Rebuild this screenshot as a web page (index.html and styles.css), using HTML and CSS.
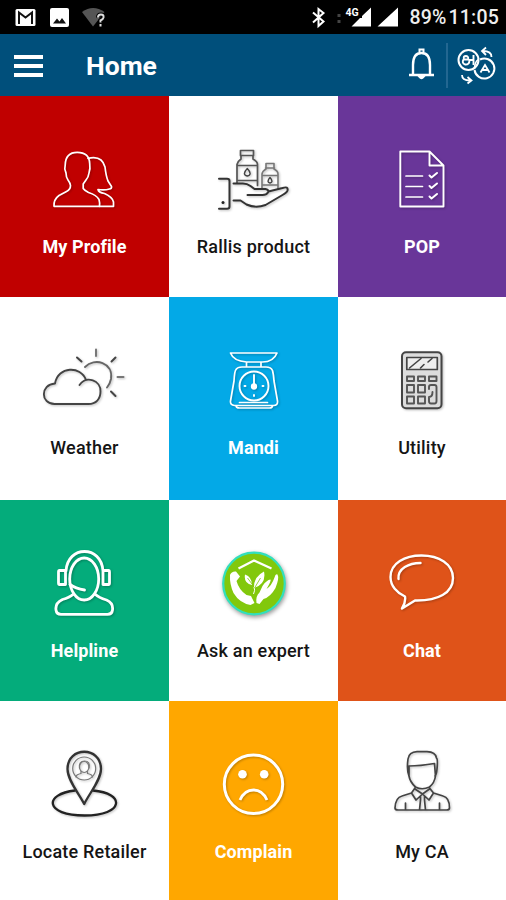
FILE: index.html
```html
<!DOCTYPE html>
<html lang="en">
<head>
<meta charset="utf-8">
<title>Home</title>
<link rel="stylesheet" href="styles.css">
</head>
<body>
<div class="status">
  <svg class="status-left" viewBox="0 0 120 34">
    <rect x="15.5" y="9" width="20" height="17" rx="1.5" fill="#fff"/>
    <path d="M19 24V12.500L25.500 17.500L32 12.500V24" fill="none" stroke="#111" stroke-width="2"/>
    <rect x="50" y="8" width="19" height="19" rx="2" fill="#fff"/>
    <path d="M53 23.500L57 18.500L59.500 21.500L62 18L66 23.500Z" fill="#111"/>
    <path d="M82 12Q93 4 104.500 12L93 26.500Z" fill="#555"/>
    <path d="M98 17.500Q98 14.500 101 14.500Q104 14.500 103.500 17.500Q103 19.500 100.500 20.500V22.500M100.500 24V26" fill="none" stroke="#000" stroke-width="4"/>
    <path d="M98 17.500Q98 14.500 101 14.500Q104 14.500 103.500 17.500Q103 19.500 100.500 20.500V22.500M100.500 24V26.500" fill="none" stroke="#ddd" stroke-width="2"/>
  </svg>
  <div class="status-right">
    <svg class="signals" viewBox="306 0 96 34">
      <path d="M312 12.500L322.500 21.500L317.500 26V9L322.500 13L312 22.500" fill="none" stroke="#fff" stroke-width="2"/>
      <path d="M336.500 14h3v3h-3zM336.500 20h3v3h-3z" fill="#444"/>
      <path d="M370 7.500V26.500H350.500L359 18H361V16ZM397 7.500V26.500H376.500Z" fill="#fff"/>
      <text class="network" x="344.500" y="16">4G</text>
    </svg>
    <span class="battery">89%</span>
    <span class="clock">11:05</span>
  </div>
</div>
<header class="appbar">
  <div class="menu"><i></i><i></i><i></i></div>
  <h1>Home</h1>
  <svg class="actions" viewBox="400 34 106 62">
    <g fill="none" stroke="#fff" stroke-width="2">
      <path d="M409 75H434M413 75V65Q413 53 421.500 53Q430 53 430 65V75" stroke-width="2.400"/>
      <path d="M419.500 52V49.500H423.500V52M419.500 77Q421.500 79.500 423.500 77Z"/>
      <path d="M447 43V88" stroke="#2f6f98" stroke-width="1.500"/>
      <circle cx="468.500" cy="60" r="10"/>
      <path d="M480 59.500A10 10 0 1 1 474.500 70" />
      <path d="M478 59.600Q474.500 62.500 474.500 69" stroke-width="1.500"/>
      <path d="M464 58.500Q463 56 466 56Q469 56.500 468 59.500H463.500Q461.500 63 465 64.500Q469.500 65 469.500 60H473M473.500 55V65" stroke-width="1.900"/>
      <path d="M480.500 72.500L485 65L489.500 72.500M482.500 70H487.500" stroke-width="1.800"/>
      <path d="M491.500 57Q491.500 51 483 51M486 47.500L482 51L486 55M462 75Q462 80.500 470 80.500M467.500 77L471.500 80.500L467.500 83.500" stroke-width="1.800"/>
    </g>
  </svg>
</header>
<main class="grid">
  <section class="tile solid red">
    <svg class="icon" viewBox="34.5 140 100 90"><g class="line thin">
      <path d="M53.500 206.300Q53 199.500 58.500 195.500L66 191.500Q70 189.500 70 185.500Q70 183.500 67.500 180Q65.500 177 65.500 173Q63.500 169 64.700 165Q65 152.300 76.700 152.300Q88.800 152.300 89.200 163.500Q90 169 88.500 173Q88 177 85.500 180L82.700 184V188.500Q84 190.500 88 192.500Q96 195 98.500 199.500Q99.500 203 99 206.300Z"/>
      <path d="M87.500 158.300Q101.500 155 104.500 167Q105.500 176 107.500 181L111 186.500Q111.500 188.500 109 189Q104 190.500 97.500 189.500Q98 192.500 104 193.500Q112 197 113 202V206.300H99"/>
    </g></svg>
    <span class="label">My Profile</span>
  </section>
  <section class="tile plain">
    <svg class="icon" viewBox="203.5 140 100 90"><g class="line dark">
      <path d="M236.500 183V164.500Q237 161.500 240.500 159V155.500H252.500V159Q257 161.500 257 164.500V185.500M240 150.500H253V155.500H240ZM236.500 165.500H257M236.500 180.500H257" stroke="#555" stroke-width="1.700"/>
      <path d="M261.500 189V174Q262 171 265.500 169V163.500H273.500V169Q277.500 171 277.500 174V189M261.500 175.500H277.500M261.500 185H277.500M265 168H274" stroke="#777" stroke-width="1.600"/>
      <path d="M246.800 168.500Q241 174.500 246.800 176Q252.500 174.500 246.800 168.500ZM269.500 177.500Q265.500 182 269.500 183Q273.500 182 269.500 177.500Z" stroke-width="1.400"/>
      <path d="M218.500 178.700H226.500Q229 178.700 229 181V206.500Q229 208.800 226.500 208.800H218.500M233 183.500H241Q246 183 250 186L254 189H265Q269 190 267.500 192.500Q266 195 262 195H247M268 191.500L282 188Q288 186 287 190.500Q286.500 192.500 282 195L265 205Q255 208.500 246 204.500L240 200.500H233" stroke-width="2" stroke="#333"/>
      <circle cx="222.500" cy="202.500" r="1.500" fill="#222" stroke="none"/>
    </g></svg>
    <span class="label">Rallis product</span>
  </section>
  <section class="tile solid purple">
    <svg class="icon" viewBox="372 140 100 90"><g class="line thin">
      <path d="M400.300 151.500H429.500L443.500 165.500V206.500H400.300ZM429.500 151.500V165.500H443.500" stroke-width="1.900"/>
      <path d="M406 176H422.500M406 186.500H422.500M406 197H422.500"/>
      <path d="M429.500 175.500L431.500 177.500L437 173M429.500 186L431.500 188L437 183.500M429.500 196.500L431.500 198.500L437 194" stroke-width="2"/>
    </g></svg>
    <span class="label">POP</span>
  </section>
  <section class="tile plain">
    <svg class="icon" viewBox="34.5 341 100 90"><g class="line dark">
      <path d="M54 404C40 404 39.500 384.500 54.500 383.500C57.500 366 80.500 365.500 85.500 380M79 385C86 375 100.500 380.500 100 391.500C100 399 95.500 404 88 404H54" stroke-width="1.900"/>
      <path d="M84.500 367C94 357 113 362.500 110.500 379Q109.500 384 106.500 387.500" stroke-width="1.900" stroke="#666"/>
      <path d="M95.500 349.500V356M117 377H123" stroke="#777" stroke-width="2"/><path d="M76.500 357.500L81 361.500M115 357.500L111 361.500M110.500 391.500L115 396" stroke-width="2"/>
    </g></svg>
    <span class="label">Weather</span>
  </section>
  <section class="tile solid blue">
    <svg class="icon" viewBox="203.5 341 100 90"><g class="line thin">
      <path d="M230 353H276.500Q273 362 262 362H246Q233 361 230 353ZM246 362V366.500M260.500 362V366.500M241.500 367H265.500Q270.500 367 272 370.500Q273 374 273.500 381L277 401Q277.500 405.500 273 405.500H234Q229.500 405 230 401L233.500 381Q234 371 235.500 369.500Q237 367 241.500 367ZM235.500 405.500Q235.500 408 239 408H269Q272 408 272 405.500M239 402.500H267"/>
      <circle cx="253.500" cy="386" r="14.500" stroke-width="1.900"/>
      <path d="M253.500 375V384M244 386H245M262 386H263M253.500 395V396" stroke-width="1.900"/>
      <circle cx="253.500" cy="386.500" r="2.300" fill="#fff"/>
    </g></svg>
    <span class="label">Mandi</span>
  </section>
  <section class="tile plain">
    <svg class="icon" viewBox="372 341 100 90"><g class="line dark">
      <rect x="402" y="352.300" width="39.500" height="56" rx="4" fill="#ddd" stroke-width="2"/>
      <rect x="406.800" y="357.500" width="30.500" height="12" fill="#eee"/>
      <path d="M409.500 368L421 358.500M420.500 368L424 364.500M428 362L432 358.500" stroke-width="1.600"/>
      <g fill="#ddd" stroke="#555" stroke-width="1.900">
        <path d="M407 376.500H414V381H407ZM418 376.500H425V381H418ZM429 376.500H436.500V381H429ZM407 385H414V392.500H407ZM418 385H425V392.500H418ZM407 396.500H414V403.500H407ZM418 396.500H425V403.500H418Z"/>
        <path d="M429 389V387Q429 385 431 385H434.500Q436.500 385 436.500 387V401Q436.500 403.500 434.500 403.500H431Q429 403.500 429 401V397Q432.500 397 432.500 392"/>
      </g>
    </g></svg>
    <span class="label">Utility</span>
  </section>
  <section class="tile solid green">
    <svg class="icon" viewBox="34.5 544 100 90"><g class="line thick">
      <ellipse cx="83.700" cy="579" rx="14.500" ry="21"/>
      <path d="M65.500 571C67 545 101 545 102.500 571M65 570.500H59Q58 570.500 58 572V583Q58 584.500 59 584.500H65ZM102.500 570.500H108Q109 570.500 109 572V583Q109 584.500 108 584.500H102.500ZM69.500 584.500Q75 588.500 84 590M72.500 594.500Q69 597.500 62 599.500Q54.500 603 55.500 610Q56 614.300 60.500 614.300H107Q111.500 614.300 112 610Q113 603 106 600Q98 597.500 95 594.500"/>
    </g></svg>
    <span class="label">Helpline</span>
  </section>
  <section class="tile plain">
    <svg class="icon" viewBox="203.5 544 100 90">
      <g class="badge"><circle cx="253.500" cy="583.500" r="30.800" fill="#82c80c" stroke="#32dfbd" stroke-width="2.200"/></g>
      <path d="M238 568.500L253.500 560.500L271 568.500" fill="none" stroke="#fff" stroke-width="2.300"/>
      <path d="M229.500 575Q231 571 235.500 571.500L239.500 576.500L236 581Q238.500 590 246 595L250.500 596L254 603L250 605Q239 603 233 593Q229 584 229.500 575Z" fill="#fff"/>
      <path d="M256 603Q255 596 259 592.500L262 586Q266 580 270 579.500Q271 580.500 266 589Q271 586 274 577.500Q275 573.500 277 574.500Q279 578 275 588Q270 597 263 599L259 604Z" fill="#fff"/>
      <path d="M253.500 588Q253 577 263.500 571.500Q266 584 253.500 588ZM251.500 585Q243 583.500 244.500 574.500Q251.500 577 251.500 585Z" fill="#fff"/>
      <path d="M253.500 587Q255 590 253 594" fill="none" stroke="#fff"/>
      <path d="M254 588L260 578M251.500 584L247 578" fill="none" stroke="#82c80c" stroke-width=".8"/>
    </svg>
    <span class="label">Ask an expert</span>
  </section>
  <section class="tile solid orange">
    <svg class="icon" viewBox="372 544 100 90"><g class="line">
      <path d="M405 596.500C397 593 390.500 586 390.500 577C390.500 563 405 555.500 421.500 555.500C439 555.500 453 564 453 578C453 593 438 601 415 600.500L402 608.500Q406 602 405 596.500Z"/>
      <path d="M398.500 579C397.500 568.500 409 563 420.500 563"/>
    </g></svg>
    <span class="label">Chat</span>
  </section>
  <section class="tile plain">
    <svg class="icon" viewBox="34.5 745 100 90"><g class="line dark">
      <path d="M74.500 790.500C43 794 44 815.500 84 815.500C124 815.500 125 793 92.500 790.500" stroke="#222" stroke-width="2.300"/>
      <path d="M83.700 804C78 793 67 780 67 769C67 746 100.500 746 100.500 769C100.500 780 89 793 83.700 804Z" stroke="#333" stroke-width="2.300"/>
      <g stroke="#777" stroke-width="1.200"><circle cx="83.700" cy="768.500" r="11.500"/><ellipse cx="83.700" cy="767" rx="4.700" ry="5.500"/><path d="M75.500 777Q75.500 774.500 80.500 773.500V771.500M87 771.500V773.500Q92 774.500 92 777M79 768Q78 761 84 761Q90 761 88.500 768"/></g>
    </g></svg>
    <span class="label">Locate Retailer</span>
  </section>
  <section class="tile solid amber">
    <svg class="icon" viewBox="203.5 745 100 90"><g class="line thick">
      <circle cx="253" cy="784.300" r="29.200" stroke-width="3"/>
      <circle cx="242" cy="774.300" r="4.300" fill="#fff" stroke="none"/><circle cx="263.700" cy="774.300" r="4.300" fill="#fff" stroke="none"/>
      <path d="M239.500 800Q244 790 253 790Q262 790 266.500 800" stroke-linecap="butt"/>
    </g></svg>
    <span class="label">Complain</span>
  </section>
  <section class="tile plain">
    <svg class="icon" viewBox="372 745 100 90"><g class="line dark">
      <path d="M409 776Q406.500 770 408 759Q409 752 417 751.700H427Q435.500 752 436.500 758Q438 759 437 769Q436.500 775 435 776M409 776V766Q420 766 434.500 763.500L435.500 776Q434.500 783 429.500 787Q422 790.500 415.500 787Q410 782 409 776Z"/>
      <path d="M415 788L411.500 793L416 800L422.500 794L429 800L433.500 793L429.500 788M415 789L422.500 794L429.500 789M411.500 793L402 796Q395.500 797.500 395 808Q395 810 398 810H446.500Q449.500 810 449.500 808Q449.500 797.500 443 796L433.500 793M420.500 796V800L419.500 810M424.500 796V800L425.500 810M405.500 803V810M439.500 803V810"/>
    </g></svg>
    <span class="label">My CA</span>
  </section>
</main>
</body>
</html>
```
FILE: styles.css
```css
* { box-sizing: border-box; }
body {
  margin: 0;
  width: 506px;
  height: 900px;
  overflow: hidden;
  display: flex;
  flex-direction: column;
  font-family: Roboto, "Liberation Sans", sans-serif;
  background: #fff;
}
svg { display: block; flex: none; }
.status {
  height: 34px;
  display: flex;
  justify-content: space-between;
  background: #000;
  color: #eee;
}
.status-left { width: 120px; height: 34px; }
.status-right {
  display: flex;
  align-items: center;
  padding-right: 7px;
  font-size: 19.5px;
  font-weight: 500;
  line-height: 34px;
}
.signals { width: 96px; height: 34px; margin-right: 6px; }
.network { font-size: 10.5px; font-weight: 700; fill: #fff; stroke: #000; stroke-width: 2px; paint-order: stroke; }
.battery { margin-right: 2px; padding-top: 2px; letter-spacing: .2px; }
.clock { padding-top: 2px; letter-spacing: .2px; }
.appbar {
  height: 62px;
  display: flex;
  align-items: center;
  padding-left: 14px;
  background: #004f7b;
  color: #fff;
}
.menu { width: 29px; display: flex; flex-direction: column; gap: 5px; margin-top: 1px; }
.menu i { height: 4px; background: #fff; }
h1 { margin: 1px auto 0 43px; font-size: 26.5px; font-weight: 700; line-height: 32px; }
.actions { width: 106px; height: 62px; }
.grid {
  display: grid;
  grid-template-columns: 169px 169px 168px;
  grid-template-rows: 201px 203px 201px 199px;
}
.tile { display: flex; flex-direction: column; align-items: center; padding-top: 44px; }
.icon { width: 100px; height: 90px; }
.label {
  margin-top: 6px;
  font-size: 18px;
  line-height: 22px;
  font-weight: 500;
  letter-spacing: .2px;
  white-space: nowrap;
  color: #151515;
}
.solid .label { font-weight: 700; color: #fff; letter-spacing: .1px; }
.red { background: #c00000; }
.purple { background: #693699; }
.blue { background: #03a9e7; }
.green { background: #04ac7b; }
.orange { background: #df5319; }
.amber { background: #ffa700; }
.line {
  fill: none;
  stroke: #fff;
  stroke-width: 2.4;
  stroke-linejoin: round;
  stroke-linecap: round;
  filter: drop-shadow(1px 1px 1px rgba(0, 0, 0, .25));
}
.thin { stroke-width: 1.7; }
.thick { stroke-width: 2.8; }
.dark { stroke: #444; stroke-width: 1.7; }
.badge { filter: drop-shadow(1px 2px 2px rgba(0, 0, 0, .4)); }
```
